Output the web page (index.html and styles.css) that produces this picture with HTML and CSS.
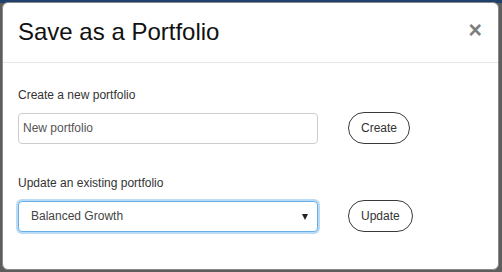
FILE: index.html
```html
<!DOCTYPE html>
<html lang="en">
  <head>
    <meta charset="UTF-8" />
    <meta name="viewport" content="width=device-width, initial-scale=1.0" />
    <title>Save as a Portfolio</title>
    <link rel="stylesheet" href="styles.css">
  </head>
  <body>
    <div class="modal">
      <div class="modal-header">
        <h1>Save as a Portfolio</h1>
        <button type="button" class="close">&times;</button>
      </div>
      <div class="modal-body">
        <div class="group">
          <label for="newName">Create a new portfolio</label>
          <div class="row">
            <input id="newName" class="field" type="text" placeholder="New portfolio" />
            <button type="button" class="pill">Create</button>
          </div>
        </div>
        <div class="group">
          <label for="existing">Update an existing portfolio</label>
          <div class="row">
            <div class="select-wrap">
              <select id="existing" class="field select">
                <option>Balanced Growth</option>
                <option>Conservative Income</option>
                <option>Aggressive Growth</option>
              </select>
              <span class="caret"></span>
            </div>
            <button type="button" class="pill">Update</button>
          </div>
        </div>
      </div>
    </div>
  </body>
</html>
```

FILE: styles.css
```css
body {
  font-family: "Liberation Sans", Arial, sans-serif;
  margin: 0;
  padding: 2px 3px 2px 2px;
  background: linear-gradient(to bottom, #1f416b 0, #1f416b 3px, #5d5d5d 3px);
  height: 268px;
}

.modal {
  background-color: #ffffff;
  border: 1px solid #8a8a8a;
  border-radius: 6px;
  box-sizing: border-box;
  height: 268px;
}

.modal-header {
  display: flex;
  align-items: center;
  justify-content: space-between;
  height: 59px;
  padding: 0 16px 0 15px;
  border-bottom: 1px solid #e5e5e5;
}

.modal-header h1 {
  margin: 0;
  font-size: 24px;
  font-weight: normal;
  color: #111;
  line-height: 1.1;
}

.close {
  background: none;
  border: none;
  padding: 0;
  margin-top: -5px;
  font-family: "Liberation Sans", Arial, sans-serif;
  font-size: 23px;
  font-weight: bold;
  line-height: 1;
  color: #7d7d7d;
  cursor: pointer;
}

.modal-body {
  padding: 24px 15px 0;
}

.group {
  margin-bottom: 31px;
}

label {
  display: block;
  font-size: 12px;
  line-height: 17px;
  color: #333;
  margin-bottom: 8px;
}

.row {
  display: flex;
  align-items: center;
  gap: 30px;
}

.field {
  width: 300px;
  height: 31px;
  box-sizing: border-box;
  border: 1px solid #cccccc;
  border-radius: 4px;
  font-family: "Liberation Sans", Arial, sans-serif;
  font-size: 12px;
  color: #555;
  padding: 0 4px;
  margin: 0;
  outline: none;
  background: #fff;
}

.field::placeholder {
  color: #555;
}

.select-wrap {
  position: relative;
}

.select {
  appearance: none;
  -webkit-appearance: none;
  padding: 0 12px;
  color: #444;
  border-color: #66afe9;
  box-shadow: 0 0 0 2px rgba(102, 175, 233, 0.45);
}

.caret {
  position: absolute;
  right: 10px;
  top: 13px;
  width: 0;
  height: 0;
  border-left: 3.5px solid transparent;
  border-right: 3.5px solid transparent;
  border-top: 6px solid #222;
  pointer-events: none;
}

.pill {
  height: 32px;
  padding: 0 12px;
  background: #fff;
  border: 1px solid #3a3a3a;
  border-radius: 16px;
  font-family: "Liberation Sans", Arial, sans-serif;
  font-size: 12px;
  color: #333;
  cursor: pointer;
}
```
